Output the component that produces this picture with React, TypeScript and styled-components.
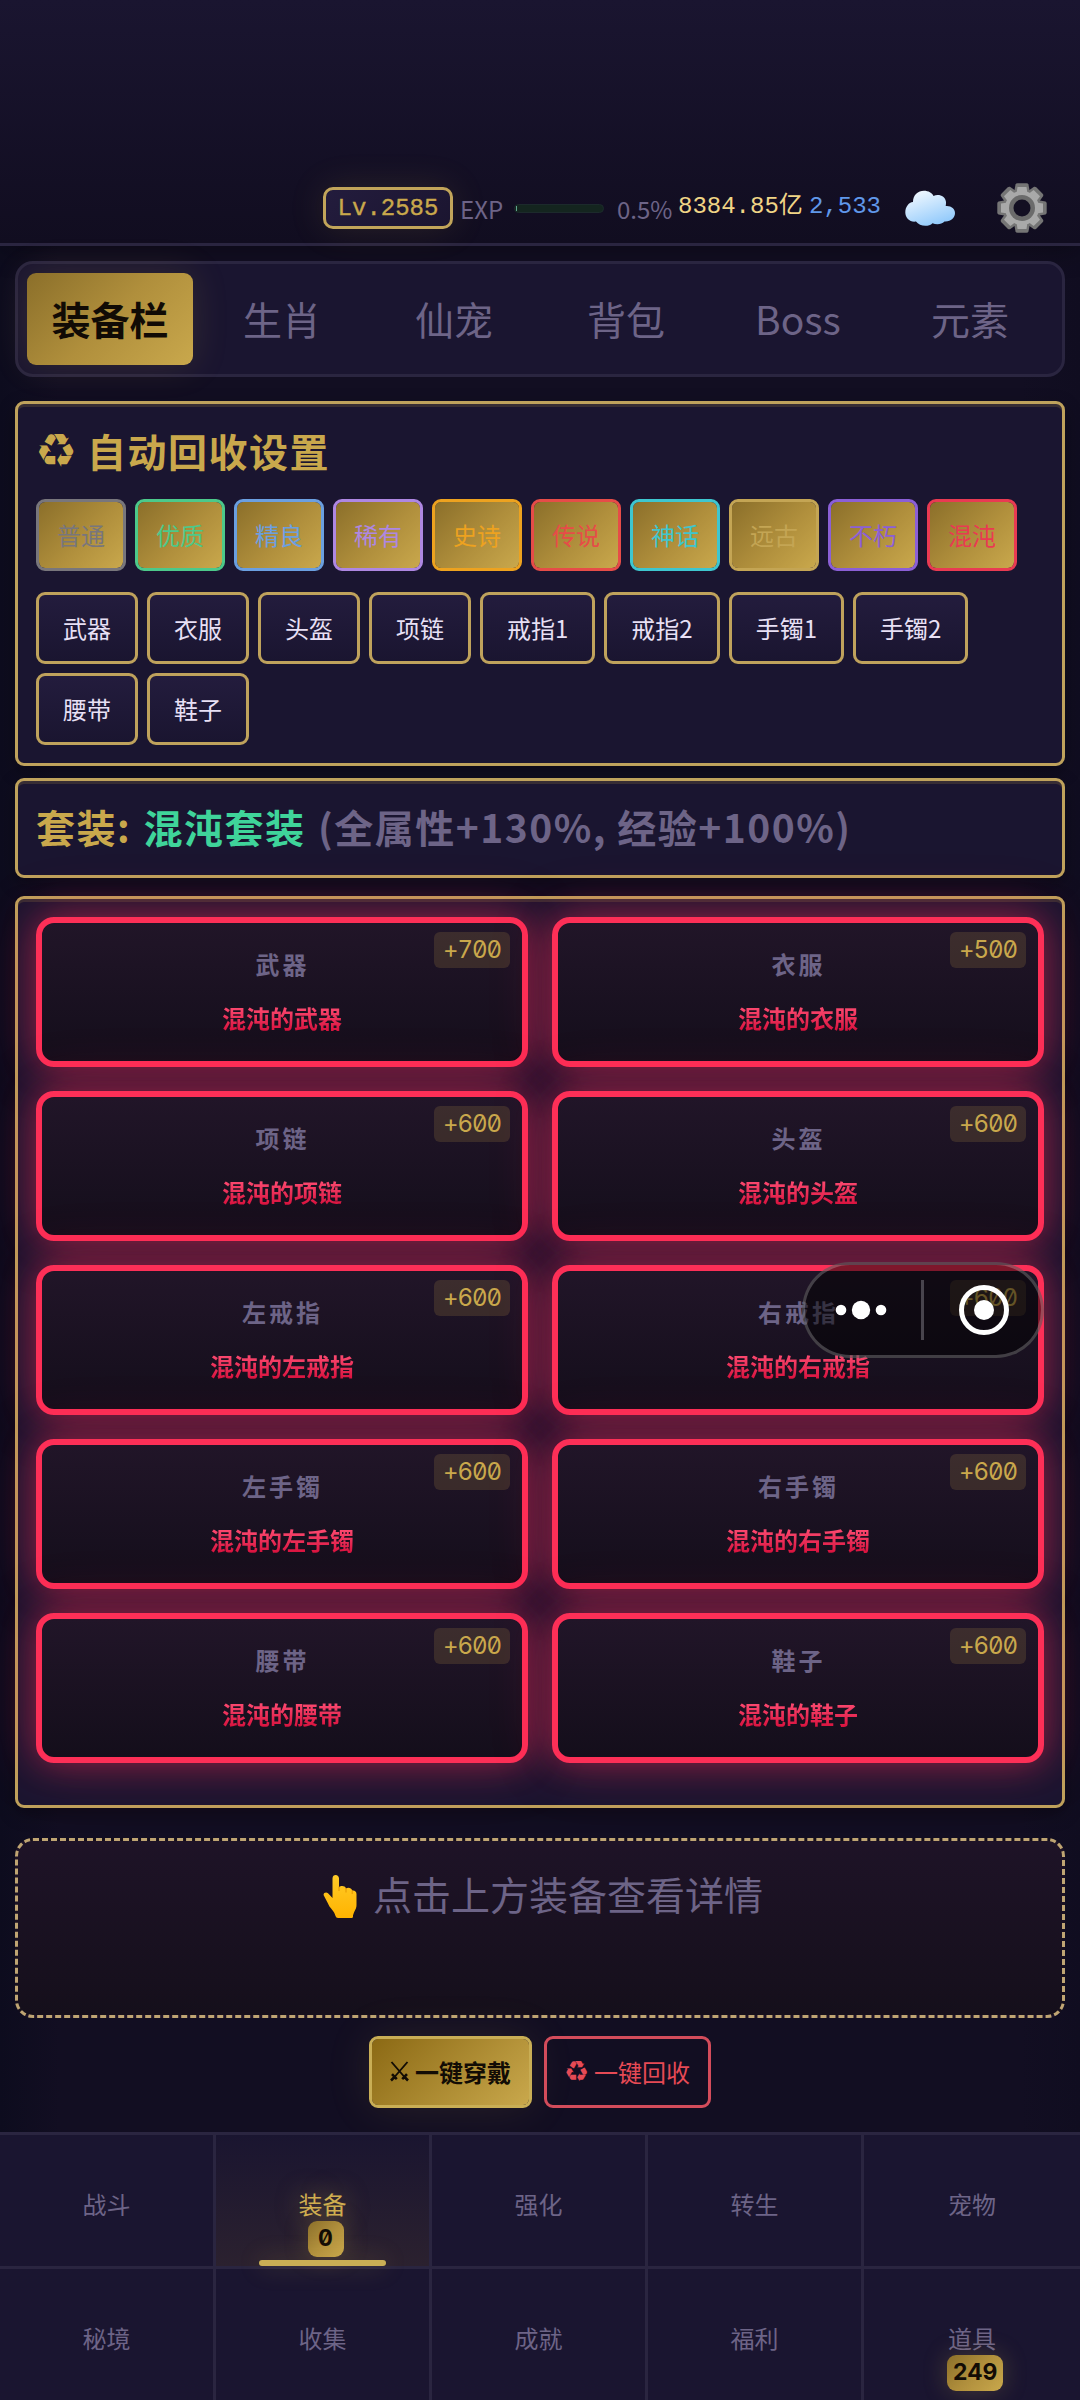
import React from "react";
import styled, { createGlobalStyle, css } from "styled-components";

const sans = `"Noto Sans CJK SC", "DejaVu Sans", sans-serif`;
const mono = `"Liberation Mono", "Noto Sans CJK SC", monospace`;

const Global = createGlobalStyle`
  * { box-sizing: border-box; }
  body {
    margin: 0;
    background: #110e20;
    font-family: ${sans};
    font-size: 24px;
    line-height: 36px;
    color: #e8e0f5;
  }
`;

const Screen = styled.div`
  position: relative;
  width: 1080px;
  height: 2400px;
  overflow: hidden;
  display: flex;
  flex-direction: column;
  background: linear-gradient(90deg, #0d0c1e 0, #120e22 60px, #120e22 1020px, #100d20 100%);
`;

const Header = styled.header`
  height: 246px;
  flex: none;
  padding: 172px 24px 0 323px;
  display: flex;
  align-items: center;
  background: linear-gradient(180deg, #1a1530 0%, #110d20 100%);
  border-bottom: 3px solid #2a2540;
  box-shadow: 0 6px 24px rgba(0, 0, 0, 0.3);
`;

const Level = styled.span`
  height: 42px;
  width: 130px;
  margin-right: 7px;
  border: 3px solid #c2a55a;
  border-radius: 10px;
  background: linear-gradient(135deg, #231c3d, #1b1530);
  box-shadow: 0 0 36px rgba(201, 168, 76, 0.13);
  color: #c9a84c;
  font: 400 24px/38px ${mono};
  -webkit-text-stroke: 0.35px #c9a84c;
  text-align: center;
`;

const Muted = styled.span<{ $w: number }>`
  width: ${(p) => p.$w}px;
  color: #6d6487;
  white-space: nowrap;
  padding-top: 2px;
`;

const ExpTrack = styled.span`
  width: 90px;
  height: 9px;
  margin: 1px 13px 0 0;
  border-radius: 5px;
  background: #14251f;
  border: 1px solid #1c2a2c;
`;

const ExpFill = styled.span`
  display: block;
  width: 1px;
  height: 5px;
  margin: 1px;
  background: #5fa58d;
`;

const Amount = styled.span<{ $c: string; $w: number }>`
  width: ${(p) => p.$w}px;
  height: 37px;
  color: ${(p) => p.$c};
  font: 400 24px/36px ${mono};
  white-space: nowrap;
`;

const HeaderIcon = styled.svg<{ $ml: number }>`
  flex: none;
  margin-left: ${(p) => p.$ml}px;
`;

const Main = styled.main`
  flex: 1;
  padding: 15px 15px 0;
  display: flex;
  flex-direction: column;
`;

const gold = css`
  background: linear-gradient(135deg, #8b6f2a 0%, #b08f3c 50%, #c9a84c 100%);
`;

const Tabs = styled.div`
  height: 116px;
  padding: 9px;
  display: flex;
  gap: 6px;
  border: 3px solid #2a2540;
  border-radius: 18px;
  background: #1a1530;
`;

const Tab = styled.button<{ $active?: boolean }>`
  flex: 1;
  height: 92px;
  padding: 0 0 3px;
  border: 0;
  border-radius: 9px;
  background: transparent;
  color: #6d6487;
  font: 400 39px/56px ${sans};
  ${(p) =>
    p.$active &&
    css`
      ${gold}
      color: #110b05;
      font-weight: 700;
      box-shadow: 0 0 36px rgba(201, 168, 76, 0.15);
    `}
`;

const Panel = styled.section<{ $mt: number; $h: number }>`
  margin-top: ${(p) => p.$mt}px;
  height: ${(p) => p.$h}px;
  padding: 18px;
  flex: none;
  border: 3px solid #bfa25c;
  border-radius: 9px;
  background: #1a1530;
  box-shadow: inset 0 3px 0 rgba(201, 168, 76, 0.17), 0 6px 18px rgba(0, 0, 0, 0.3);
`;

const Title = styled.h2`
  margin: -2px 0 19px;
  height: 60px;
  display: flex;
  align-items: center;
  gap: 11px;
  color: #c9a84c;
  font: 700 39px/60px ${sans};
  letter-spacing: 1.5px;
`;

const SetLine = styled(Title)`
  display: block;
  margin: -3px 0 0;
  white-space: pre;
  word-spacing: 2px;
`;

const Tint = styled.span<{ $c: string }>`
  color: ${(p) => p.$c};
  word-spacing: 0;
`;

const Chips = styled.div`
  display: flex;
  flex-wrap: wrap;
  gap: 9px;
  margin-bottom: 21px;
`;

const Chip = styled.button<{ $c?: string }>`
  height: 72px;
  padding: 0 24px;
  border: 3px solid #bfa25c;
  border-radius: 9px;
  background: linear-gradient(180deg, #231c3d, #1a1530);
  color: #e8e0f5;
  font: 400 24px/36px ${sans};
  ${(p) =>
    p.$c &&
    css`
      padding: 0 18px;
      background: linear-gradient(135deg, #8b6f2a 0%, #b08f3c 55%, #c9a84c 100%) padding-box;
      border-color: ${p.$c};
      color: ${p.$c};
    `}
`;

const Grid = styled.div`
  display: grid;
  grid-template-columns: 492px 492px;
  grid-auto-rows: 150px;
  gap: 24px;
`;

const Card = styled.article`
  position: relative;
  padding-top: 23px;
  display: flex;
  flex-direction: column;
  align-items: center;
  gap: 18px;
  border: 6px solid #fd2f57;
  border-radius: 18px;
  background: linear-gradient(180deg, #211528 0%, #140e1b 100%);
  box-shadow: 0 0 60px rgba(255, 45, 85, 0.25), 0 0 33px rgba(255, 45, 85, 0.4);
`;

const Slot = styled.span`
  padding-left: 1px;
  color: #6d6487;
  font-weight: 700;
  letter-spacing: 3px;
`;

const ItemName = styled.span`
  font-weight: 700;
  background: linear-gradient(180deg, #ff4e74 15%, #d8133f 85%);
  -webkit-background-clip: text;
  background-clip: text;
  color: transparent;
`;

const Plus = styled.span`
  position: absolute;
  top: 9px;
  right: 12px;
  width: 76px;
  height: 36px;
  border-radius: 6px;
  background: rgba(201, 168, 76, 0.17);
  color: #c9a84c;
  font: 400 24px/35px Inter, sans-serif;
  font-feature-settings: "zero", "tnum";
  letter-spacing: -1px;
  text-align: center;
`;

const Detail = styled.section`
  margin-top: 30px;
  height: 180px;
  flex: none;
  padding: 23px 0 0 6px;
  display: flex;
  justify-content: center;
  gap: 15px;
  border: 3px dashed #bfa573;
  border-radius: 18px;
  background: linear-gradient(180deg, #1e1327, #150f1b);
  color: #6d6487;
  font-size: 39px;
  line-height: 58px;
`;

const Actions = styled.div`
  margin-top: 18px;
  display: flex;
  justify-content: center;
  gap: 12px;
`;

const Action = styled.button<{ $primary?: boolean }>`
  height: 72px;
  padding: 0;
  width: 167px;
  display: flex;
  align-items: center;
  justify-content: center;
  gap: 6px;
  border: 3px solid #d34c5b;
  border-radius: 9px;
  background: transparent;
  color: #e64a55;
  font: 400 24px/36px ${sans};
  ${(p) =>
    p.$primary &&
    css`
      width: 163px;
      padding-bottom: 1px;
      border-color: #c9ae55;
      background: linear-gradient(135deg, #8b6914 0%, #c9a84c 100%) padding-box;
      color: #120c05;
      font-weight: 700;
      box-shadow: 0 0 45px rgba(201, 168, 76, 0.12);
    `}
`;

const Recycle = styled.span<{ $size: number; $w: number }>`
  width: ${(p) => p.$w}px;
  display: flex;
  justify-content: center;
  font: 400 ${(p) => p.$size}px/1 "DejaVu Sans", sans-serif;
  letter-spacing: 0;
`;

const Nav = styled.nav`
  flex: none;
  height: 268px;
  display: grid;
  grid-template-columns: repeat(5, 216px);
  grid-auto-rows: 134px;
  border-top: 3px solid #2a2540;
  background: #1a1530;
`;

const NavCell = styled.div<{ $active?: boolean }>`
  position: relative;
  padding-top: 51px;
  display: flex;
  flex-direction: column;
  align-items: center;
  border-right: 3px solid #2a2540;
  border-bottom: 3px solid #2a2540;
  color: ${(p) => (p.$active ? "#d0ae50" : "#6d6487")};
  ${(p) =>
    p.$active &&
    css`
      background: linear-gradient(180deg, #1a1530, #2b212f);
      text-shadow: 0 0 24px rgba(201, 168, 76, 0.5);
    `}
  &:nth-child(5n) {
    border-right: 0;
  }
`;

const Count = styled.span<{ $wide: boolean }>`
  height: 36px;
  width: ${(p) => (p.$wide ? 56 : 36)}px;
  margin: -1px 0 0 6px;
  ${gold}
  border-radius: 9px;
  color: #120c05;
  font: 700 23px/34px Inter, sans-serif;
  font-feature-settings: "zero", "tnum";
  text-align: center;
  text-shadow: none;
  box-shadow: 0 0 24px rgba(201, 168, 76, 0.25);
`;

const Underline = styled.i`
  position: absolute;
  left: 43px;
  bottom: 0;
  width: 127px;
  height: 6px;
  border-radius: 3px;
  background: #c9ae55;
  box-shadow: 0 0 24px rgba(201, 168, 76, 0.3);
`;

const Capsule = styled.div`
  position: absolute;
  left: 802px;
  top: 1262px;
  width: 242px;
  height: 96px;
  border: 3px solid rgba(255, 255, 255, 0.22);
  border-radius: 48px;
  background: rgba(0, 0, 0, 0.5);
  display: flex;
`;

const HandIcon = styled.svg`
  margin-top: 10px;
`;

const Cloud = () => (
  <HeaderIcon $ml={25} width="50" height="36" viewBox="0 0 50 36">
    <defs>
      <linearGradient id="cloud" x1="0.2" y1="0" x2="0.7" y2="1">
        <stop offset="0" stopColor="#f2f9ff" />
        <stop offset="1" stopColor="#8ec8fb" />
      </linearGradient>
    </defs>
    <path
      fill="url(#cloud)"
      d="M8 12C8 5 13 .8 19 .8c4.500 0 8 2.200 9.500 5.200C33 3.500 40.500 5.500 41 12c0 1.500 0 2.500-.3 4C46 15.500 50 18.500 50 23c0 5-4.500 9-10.500 8.500-3 3-8 3.300-12 1.700-4 4-13 3.300-16.500-1.700C5 32.500.3 28 .3 22.500.3 17 3.500 12.500 8 12z"
    />
  </HeaderIcon>
);

const teeth = [0, 45, 90, 135, 180, 225, 270, 315];
const Gear = () => (
  <HeaderIcon $ml={42} width="50" height="50" viewBox="-25 -25 50 50">
    <g fill="#757575">
      {teeth.map((a) => (
        <path key={a} transform={`rotate(${a})`} d="M-8-15L-6.500-23.500Q-6-24.700-4.500-24.700H4.500Q6-24.700 6.500-23.500L8-15z" />
      ))}
      <circle r="19.500" />
    </g>
    <g fill="#a9a9a9">
      {teeth.map((a) => (
        <path key={a} transform={`rotate(${a})`} d="M-5.500-14L-4.500-21H4.500L5.500-14z" />
      ))}
      <circle r="17" />
    </g>
    <circle r="13" fill="#6b6b6b" />
    <circle r="8.500" fill="#130f22" />
  </HeaderIcon>
);

const Hand = () => (
  <HandIcon width="35" height="46" viewBox="0 0 35 46">
    <defs>
      <linearGradient id="hand" x1="0" y1="0" x2="0" y2="1">
        <stop offset="0" stopColor="#ffcb28" />
        <stop offset="1" stopColor="#ffb300" />
      </linearGradient>
    </defs>
    <path
      fill="url(#hand)"
      d="M9.500 4.500C9.500 2 11 1 12.700 1S16 2.200 16 4.500V13.500C17.500 11.500 22 11.500 23 14.500 25 13 28.500 13.800 29.200 16.500 31.500 16 33.500 17.500 33.500 20V31C33.500 35 31 37 30 41.500V42.500Q30 44 28.500 44H15Q13 44 12.500 42C11.500 37 6.500 34 5 29.500L.8 21.500C-.2 19 3 17.500 5 19.200L9.500 24z"
    />
    <path d="M16 12.500V17M23 14V18.500M29.200 16.500V20" stroke="#e59600" strokeWidth="1" fill="none" />
  </HandIcon>
);

const Swords = () => (
  <svg width="19" height="21" viewBox="0 0 19 21" fill="none" stroke="currentColor">
    <path d="M1.500 1L14.500 16M17.500 1L4.500 16" strokeWidth="1.900" />
    <path d="M2 13.200L6.800 18.200M1 19.500L4.500 16M17 13.200L12.200 18.200M18 19.500L14.500 16" strokeWidth="2.600" />
  </svg>
);

const qualities: [string, string][] = [
  ["普通", "#78767c"],
  ["优质", "#4cc98a"],
  ["精良", "#6b9fe0"],
  ["稀有", "#ae87e2"],
  ["史诗", "#eda21f"],
  ["传说", "#e64c48"],
  ["神话", "#3ec6cf"],
  ["远古", "#c4a554"],
  ["不朽", "#8b5fd6"],
  ["混沌", "#e93a52"],
];
const slots = ["武器", "衣服", "头盔", "项链", "戒指1", "戒指2", "手镯1", "手镯2", "腰带", "鞋子"];
const gear: [string, number][] = [
  ["武器", 700],
  ["衣服", 500],
  ["项链", 600],
  ["头盔", 600],
  ["左戒指", 600],
  ["右戒指", 600],
  ["左手镯", 600],
  ["右手镯", 600],
  ["腰带", 600],
  ["鞋子", 600],
];
const nav: { label: string; count?: number; active?: boolean }[] = [
  { label: "战斗" },
  { label: "装备", count: 0, active: true },
  { label: "强化" },
  { label: "转生" },
  { label: "宠物" },
  { label: "秘境" },
  { label: "收集" },
  { label: "成就" },
  { label: "福利" },
  { label: "道具", count: 249 },
];

export default function App() {
  return (
    <Screen>
      <Global />
      <Header>
        <Level>Lv.2585</Level>
        <Muted $w={54}>EXP</Muted>
        <ExpTrack>
          <ExpFill />
        </ExpTrack>
        <Muted $w={61}>0.5%</Muted>
        <Amount $c="#f0d586" $w={131}>8384.85亿</Amount>
        <Amount $c="#6098ea" $w={71}>2,533</Amount>
        <Cloud />
        <Gear />
      </Header>
      <Main>
        <Tabs>
          {["装备栏", "生肖", "仙宠", "背包", "Boss", "元素"].map((t, i) => (
            <Tab key={t} $active={i === 0}>
              {t}
            </Tab>
          ))}
        </Tabs>
        <Panel $mt={24} $h={365}>
          <Title>
            <Recycle $size={47} $w={40}>♻</Recycle>
            自动回收设置
          </Title>
          <Chips>
            {qualities.map(([q, c]) => (
              <Chip key={q} $c={c}>
                {q}
              </Chip>
            ))}
          </Chips>
          <Chips>
            {slots.map((s) => (
              <Chip key={s}>{s}</Chip>
            ))}
          </Chips>
        </Panel>
        <Panel $mt={12} $h={100}>
          <SetLine>
            套装: <Tint $c="#3fd49a">混沌套装</Tint> <Tint $c="#6d6487">(全属性+130%, 经验+100%)</Tint>
          </SetLine>
        </Panel>
        <Panel $mt={18} $h={912}>
          <Grid>
            {gear.map(([name, plus]) => (
              <Card key={name}>
                <Slot>{name}</Slot>
                <ItemName>混沌的{name}</ItemName>
                <Plus>+{plus}</Plus>
              </Card>
            ))}
          </Grid>
        </Panel>
        <Detail>
          <Hand />
          点击上方装备查看详情
        </Detail>
        <Actions>
          <Action $primary>
            <Swords />
            一键穿戴
          </Action>
          <Action>
            <Recycle $size={28} $w={23}>♻</Recycle>
            一键回收
          </Action>
        </Actions>
      </Main>
      <Nav>
        {nav.map((n) => (
          <NavCell key={n.label} $active={n.active}>
            {n.label}
            {n.count !== undefined && <Count $wide={n.count > 9}>{n.count}</Count>}
            {n.active && <Underline />}
          </NavCell>
        ))}
      </Nav>
      <Capsule>
        <svg width="236" height="90" viewBox="805 1265 236 90">
          <g fill="#fff">
            <circle cx="841" cy="1310" r="5.300" />
            <circle cx="861" cy="1310" r="9.200" />
            <circle cx="881" cy="1310" r="5.300" />
            <circle cx="984" cy="1310" r="10" />
          </g>
          <rect x="921" y="1280" width="3" height="60" fill="#48444d" />
          <circle cx="984" cy="1310" r="22.500" fill="none" stroke="#fff" strokeWidth="5" />
        </svg>
      </Capsule>
    </Screen>
  );
}
